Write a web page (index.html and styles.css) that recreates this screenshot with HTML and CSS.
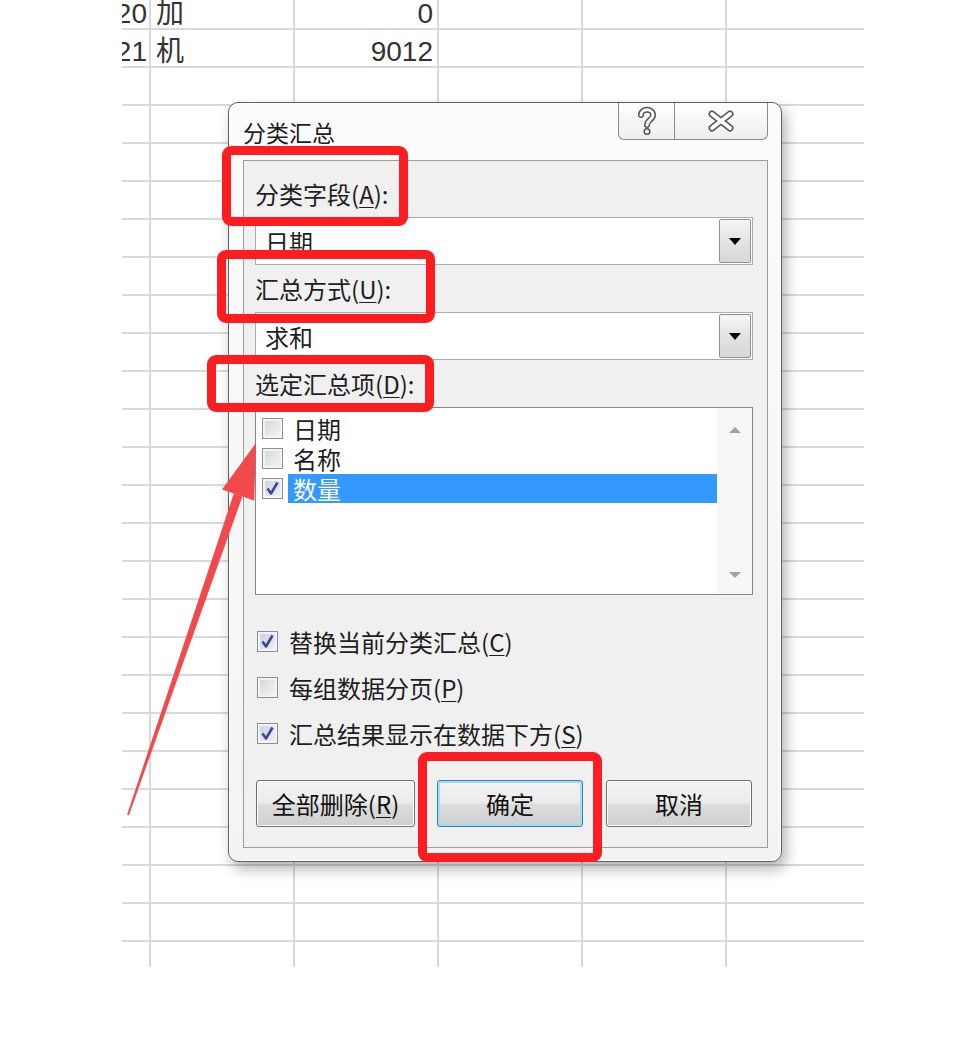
FILE: index.html
```html
<!DOCTYPE html>
<html lang="zh-CN">
<head>
    <meta charset="UTF-8">
    <meta name="viewport" content="width=device-width, initial-scale=1.0">
    <title>分类汇总</title>
    <link rel="stylesheet" href="styles.css">
</head>
<body>
<div class="page">

    <!-- worksheet behind the dialog -->
    <div class="sheet">
        <div class="sheet-row first">
            <div class="cell num">20</div>
            <div class="cell">加</div>
            <div class="cell num">0</div>
        </div>
        <div class="sheet-row">
            <div class="cell num">21</div>
            <div class="cell">机</div>
            <div class="cell num">9012</div>
        </div>
    </div>

    <div class="dialog">
        <div class="titlebar">
            <span class="title">分类汇总</span>
            <div class="caption-buttons">
                <span class="cap-btn help">
                    <svg width="22" height="30" viewBox="0 0 22 30">
                        <path d="M5 9 C5 2 17 2 17 9 C17 14 11 14 11 19" fill="none" stroke="#555" stroke-width="6" stroke-linecap="round"/>
                        <path d="M5 9 C5 2 17 2 17 9 C17 14 11 14 11 19" fill="none" stroke="#fff" stroke-width="3" stroke-linecap="round"/>
                        <circle cx="11" cy="25.5" r="2.8" fill="#fff" stroke="#555" stroke-width="1.5"/>
                    </svg>
                </span>
                <span class="cap-btn close">
                    <svg width="28" height="22" viewBox="0 0 28 22">
                        <path d="M5 4 L23 18 M23 4 L5 18" stroke="#555" stroke-width="7" stroke-linecap="round"/>
                        <path d="M5 4 L23 18 M23 4 L5 18" stroke="#fff" stroke-width="4" stroke-linecap="round"/>
                    </svg>
                </span>
            </div>
        </div>

        <div class="panel">
            <div class="field-label">分类字段(<u>A</u>):</div>
            <div class="combo">
                <span class="combo-text">日期</span>
                <span class="combo-btn"><i class="tri-down"></i></span>
            </div>

            <div class="field-label">汇总方式(<u>U</u>):</div>
            <div class="combo">
                <span class="combo-text">求和</span>
                <span class="combo-btn"><i class="tri-down"></i></span>
            </div>

            <div class="field-label">选定汇总项(<u>D</u>):</div>
            <div class="listbox">
                <div class="list-items">
                    <div class="list-item">
                        <span class="cb"></span>
                        <span class="item-text">日期</span>
                    </div>
                    <div class="list-item">
                        <span class="cb"></span>
                        <span class="item-text">名称</span>
                    </div>
                    <div class="list-item selected">
                        <span class="cb checked">
                            <svg width="19" height="19" viewBox="0 0 19 19"><path d="M4.5 9.5 L8 14.5 L14.5 3.5" fill="none" stroke="#3a4a8c" stroke-width="2.6" stroke-linejoin="round"/></svg>
                        </span>
                        <span class="item-text">数量</span>
                    </div>
                </div>
                <div class="scrollbar">
                    <i class="sb-arrow up"></i>
                    <i class="sb-arrow down"></i>
                </div>
            </div>

            <div class="options">
                <div class="option">
                    <span class="cb checked">
                        <svg width="19" height="19" viewBox="0 0 19 19"><path d="M4.5 9.5 L8 14.5 L14.5 3.5" fill="none" stroke="#3a4a8c" stroke-width="2.6" stroke-linejoin="round"/></svg>
                    </span>
                    <span>替换当前分类汇总(<u>C</u>)</span>
                </div>
                <div class="option">
                    <span class="cb"></span>
                    <span>每组数据分页(<u>P</u>)</span>
                </div>
                <div class="option">
                    <span class="cb checked">
                        <svg width="19" height="19" viewBox="0 0 19 19"><path d="M4.5 9.5 L8 14.5 L14.5 3.5" fill="none" stroke="#3a4a8c" stroke-width="2.6" stroke-linejoin="round"/></svg>
                    </span>
                    <span>汇总结果显示在数据下方(<u>S</u>)</span>
                </div>
            </div>

            <div class="buttons">
                <button class="btn wide">全部删除(<u>R</u>)</button>
                <button class="btn default">确定</button>
                <button class="btn">取消</button>
            </div>
        </div>
    </div>

    <!-- annotations drawn over the screenshot -->
    <div class="mark mark-field"></div>
    <div class="mark mark-method"></div>
    <div class="mark mark-items"></div>
    <div class="mark mark-ok"></div>

    <svg class="arrow" width="968" height="1042" viewBox="0 0 968 1042">
        <polygon points="127.05,814.7 128.95,815.3 242.4,496.5 233.8,493.5" fill="#f24a4c"/>
        <polygon points="256,443 222,489.5 254.2,500.5" fill="#f24a4c"/>
    </svg>
</div>
</body>
</html>
```

FILE: styles.css
```css
body {
    margin: 0;
    background-color: #fff;
}
.page {
    position: relative;
    width: 968px;
    height: 1042px;
    overflow: hidden;
}

/* worksheet */
.sheet {
    margin-left: 122px;
    width: 742px;
    height: 967px;
    overflow: hidden;
    font-family: "Liberation Sans", "Noto Sans CJK SC", sans-serif;
    font-size: 28px;
    color: #333;
    background-image:
        repeating-linear-gradient(to bottom, transparent 0, transparent 28px, #d9d9d9 28px, #d9d9d9 30px, transparent 30px, transparent 38px),
        linear-gradient(to right, #d9d9d9 2px, transparent 2px);
    background-size: 100% 942px, 144px 100%;
    background-position: 0 0, 27px 0;
    background-repeat: no-repeat, repeat-x;
}
.sheet-row {
    display: grid;
    grid-template-columns: 29px 144px 144px;
    align-items: end;
    height: 38px;
    padding-bottom: 2px;
    box-sizing: border-box;
}
.sheet-row.first {
    height: 30px;
    padding-bottom: 7px;
}
.cell {
    line-height: 28px;
    padding-left: 5px;
    white-space: nowrap;
}
.cell.num {
    display: flex;
    justify-content: flex-end;
    padding-left: 0;
    padding-right: 6px;
}
.cell.num:first-child {
    padding-right: 4px;
}

/* dialog */
.dialog {
    position: absolute;
    left: 228px;
    top: 102px;
    width: 554px;
    height: 760px;
    box-sizing: border-box;
    border: 1px solid #5f5f5f;
    border-radius: 10px;
    background: linear-gradient(#fcfcfc, #f3f3f3);
    box-shadow: 4px 7px 14px rgba(0, 0, 0, 0.3), inset 0 0 0 1px #fff;
    padding: 0 13px 13px 14px;
    display: flex;
    flex-direction: column;
    font-family: "Noto Sans CJK SC", sans-serif;
    font-size: 24px;
    color: #1e1e1e;
}
.titlebar {
    height: 57px;
    display: flex;
    justify-content: space-between;
    align-items: flex-start;
}
.title {
    margin-top: 13px;
    line-height: 32px;
    font-size: 23px;
}
.caption-buttons {
    display: flex;
    height: 37px;
    border: 1px solid #8a8a8a;
    border-top: none;
    border-radius: 0 0 6px 6px;
    background: linear-gradient(#ffffff, #eeeeee);
    box-sizing: border-box;
}
.cap-btn {
    display: flex;
    align-items: center;
    justify-content: center;
}
.cap-btn.help {
    width: 55px;
}
.cap-btn.close {
    width: 92px;
    border-left: 1px solid #8a8a8a;
}

.panel {
    flex: 1;
    border: 1px solid #9d9d9d;
    background-color: #f0f0f0;
    padding: 9px 14px 0 11px;
}
.field-label {
    height: 47px;
    line-height: 47px;
}
u {
    text-underline-offset: 3px;
    text-decoration-thickness: 1px;
}
.combo {
    height: 48px;
    box-sizing: border-box;
    border: 1px solid #ababab;
    background-color: #fff;
    display: flex;
    align-items: center;
    justify-content: space-between;
    padding: 1px;
}
.combo-text {
    padding-left: 8px;
}
.combo-btn {
    width: 32px;
    height: 100%;
    box-sizing: border-box;
    border: 1px solid #8e8f8f;
    border-radius: 2px;
    background: linear-gradient(#f6f6f6, #e3e3e3 50%, #d8d8d8);
    display: flex;
    align-items: center;
    justify-content: center;
}
.tri-down {
    width: 0;
    height: 0;
    border-left: 6px solid transparent;
    border-right: 6px solid transparent;
    border-top: 7px solid #000;
}

.listbox {
    height: 188px;
    box-sizing: border-box;
    border: 1px solid #828790;
    background-color: #fff;
    display: flex;
}
.list-items {
    flex: 1;
    padding: 5px 0 0 6px;
}
.list-item {
    height: 30px;
    display: flex;
    align-items: center;
}
.item-text {
    flex: 1;
    height: 29px;
    line-height: 29px;
    margin-left: 5px;
    padding-left: 5px;
}
.list-item.selected .item-text {
    background-color: #3399ff;
    color: #fff;
}
.scrollbar {
    width: 35px;
    background-color: #f7f7f7;
    display: flex;
    flex-direction: column;
    justify-content: space-between;
    align-items: center;
    padding: 19px 0 16px;
    box-sizing: border-box;
}
.sb-arrow {
    width: 0;
    height: 0;
    border-left: 6px solid transparent;
    border-right: 6px solid transparent;
}
.sb-arrow.up {
    border-bottom: 6px solid #a2a2a2;
}
.sb-arrow.down {
    border-top: 6px solid #a2a2a2;
}

/* checkboxes */
.cb {
    width: 21px;
    height: 21px;
    box-sizing: border-box;
    border: 1px solid #8e8f8f;
    background: linear-gradient(135deg, #d4d4d4, #f8f8f8);
    box-shadow: inset 0 0 0 2px #f4f4f4;
    display: flex;
    align-items: center;
    justify-content: center;
    flex-shrink: 0;
}
.cb.checked {
    background: linear-gradient(135deg, #c9cde6, #f2f3fb);
}

.options {
    margin-top: 23px;
}
.option {
    height: 46px;
    display: flex;
    align-items: center;
    padding-left: 2px;
}
.option .cb {
    margin-right: 11px;
}

.buttons {
    display: flex;
    margin-top: 24px;
    padding-left: 1px;
    gap: 22px;
}
.btn {
    width: 146px;
    height: 47px;
    padding: 0;
    font-family: inherit;
    font-size: 24px;
    color: #111;
    border: 1px solid #707070;
    border-radius: 3px;
    background: linear-gradient(#f3f3f3, #ebebeb 49%, #dddddd 51%, #cfcfcf);
    box-shadow: inset 0 0 0 1px #fcfcfc;
}
.btn.wide {
    width: 159px;
}
.btn.default {
    border-color: #3c7fb1;
    box-shadow: inset 0 0 0 2px #a6dbf7;
    margin-right: 1px;
}

/* red annotation boxes */
.mark {
    position: absolute;
    box-sizing: border-box;
    border: 9px solid #fb1d1f;
    border-radius: 9px;
}
.mark-field {
    left: 222px;
    top: 146px;
    width: 186px;
    height: 80px;
}
.mark-method {
    left: 217px;
    top: 250px;
    width: 218px;
    height: 73px;
}
.mark-items {
    left: 207px;
    top: 355px;
    width: 227px;
    height: 57px;
}
.mark-ok {
    left: 418px;
    top: 752px;
    width: 184px;
    height: 110px;
}
.arrow {
    position: absolute;
    left: 0;
    top: 0;
}
```
